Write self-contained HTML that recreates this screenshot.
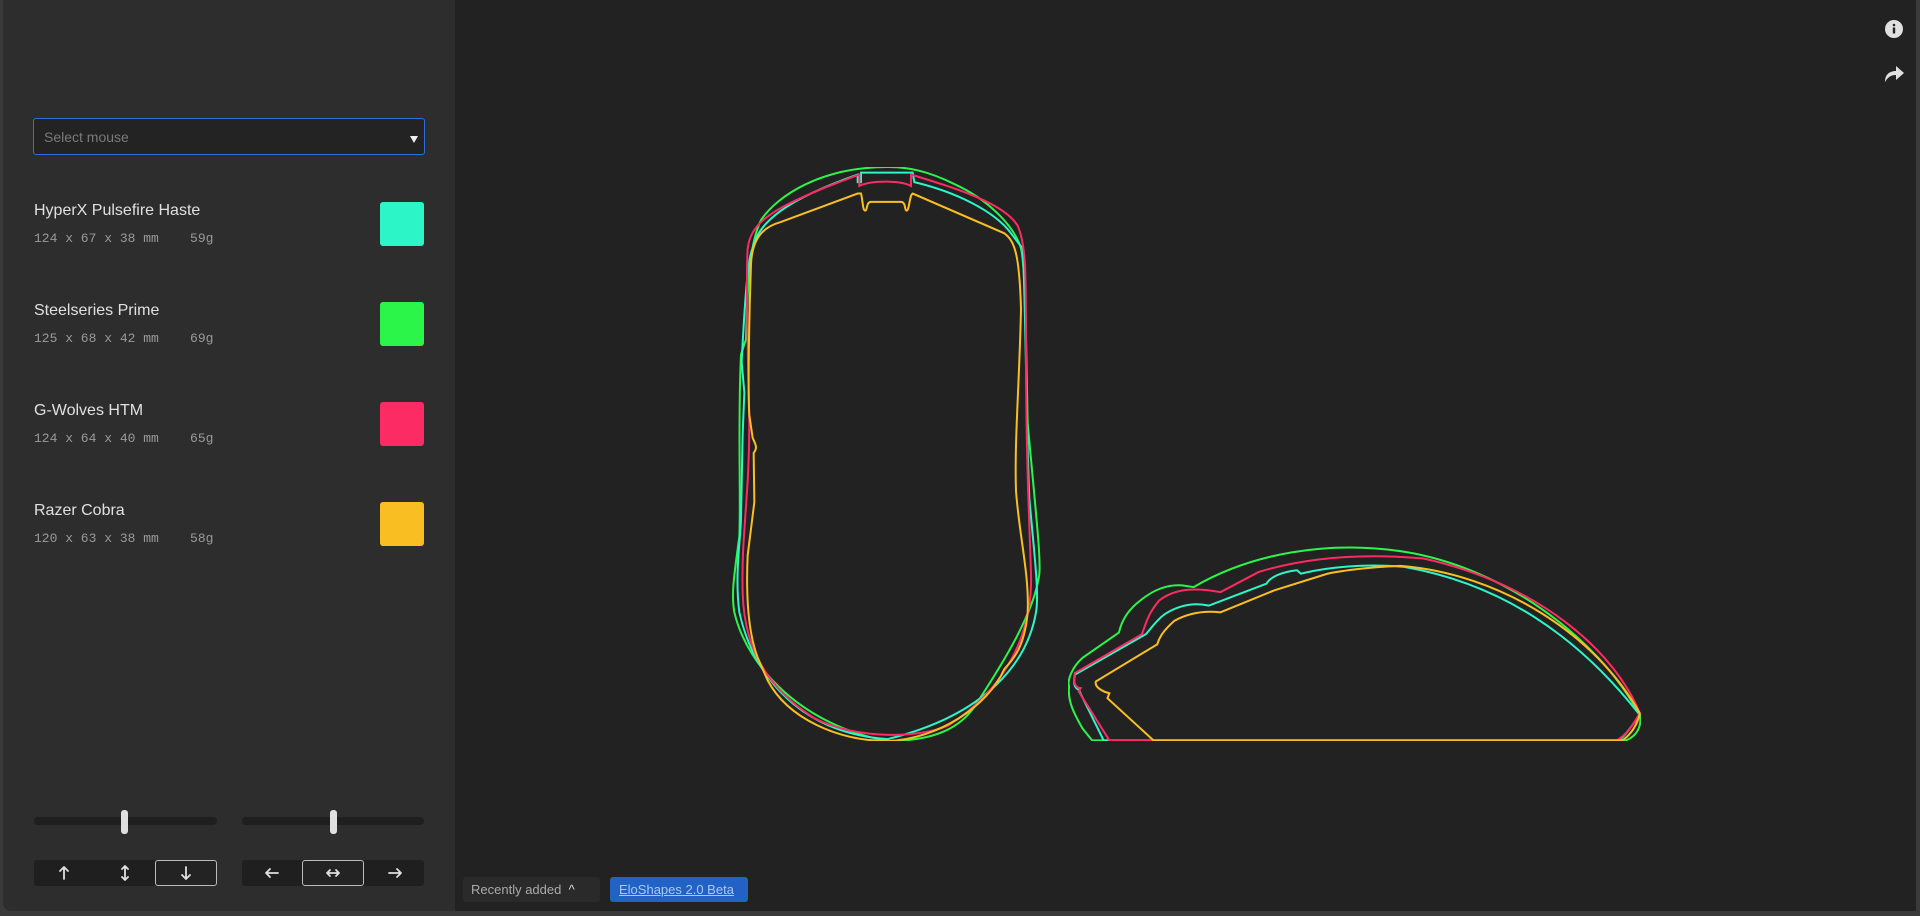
<!DOCTYPE html>
<html><head><meta charset="utf-8"><style>
*{box-sizing:border-box;margin:0;padding:0}
body{width:1920px;height:916px;background:#3a3a3a;position:relative;overflow:hidden;font-family:"Liberation Sans",sans-serif}
#side{position:absolute;left:3px;top:0;width:452px;height:911px;background:#2d2d2d;border-bottom-left-radius:8px}
#main{position:absolute;left:455px;top:0;width:1461px;height:911px;background:#222}
.sel{position:absolute;left:30px;top:118px;width:392px;height:37px;border:1px solid #2d6fe0;border-radius:3px;background:#232323;color:#7a7a7a;font-size:14px;padding:10px 10px}
.sel:after{content:"";position:absolute;right:6px;top:17px;border-left:4px solid transparent;border-right:4px solid transparent;border-top:7px solid #eee}
.it{position:absolute;left:31px;color:#e0e0e0;font-size:16px}
.it .s{font-family:"Liberation Mono",monospace;font-size:13px;color:#9a9a9a;margin-top:11px;white-space:pre}
.sw{position:absolute;left:377px;width:44px;height:44px;border-radius:3px}
.tr{position:absolute;top:817px;height:8px;background:#1f1f1f;border-radius:4px}
.th{position:absolute;top:810px;width:7px;height:24px;background:#e0e0e0;border-radius:3px}
.bg{position:absolute;top:860px;height:26px;background:#1f1f1f;border-radius:3px}
.hl{position:absolute;top:860px;height:26px;border:1px solid #bbb;border-radius:3px;background:#232323}
.ar{position:absolute;top:865px}
</style></head><body>
<div id="side">
<div class="sel">Select mouse</div>
<div class="it" style="top:202px">HyperX Pulsefire Haste<div class="s">124 x 67 x 38 mm    59g</div></div>
<div class="sw" style="top:202px;background:#2cf5c8"></div>
<div class="it" style="top:302px">Steelseries Prime<div class="s">125 x 68 x 42 mm    69g</div></div>
<div class="sw" style="top:302px;background:#2cf54a"></div>
<div class="it" style="top:402px">G-Wolves HTM<div class="s">124 x 64 x 40 mm    65g</div></div>
<div class="sw" style="top:402px;background:#fc2b63"></div>
<div class="it" style="top:502px">Razer Cobra<div class="s">120 x 63 x 38 mm    58g</div></div>
<div class="sw" style="top:502px;background:#f9bf22"></div>
<div class="tr" style="left:31px;width:183px"></div><div class="th" style="left:118px"></div>
<div class="tr" style="left:239px;width:182px"></div><div class="th" style="left:327px"></div>
<div class="bg" style="left:31px;width:183px"></div><div class="hl" style="left:152px;width:62px"></div>
<div class="bg" style="left:239px;width:182px"></div><div class="hl" style="left:299px;width:62px"></div>
<svg class="ar" style="left:0;top:860px" width="452" height="26" fill="none" stroke="#e0e0e0" stroke-width="1.8" stroke-linecap="round" stroke-linejoin="round">
<path d="M61 19V7M57 11L61 7L65 11"/>
<path d="M122 6V20M119 9L122 6L125 9M119 17L122 20L125 17"/>
<path d="M183 7V19M179 15L183 19L187 15"/>
<path d="M263 13H275M267 9L263 13L267 17"/>
<path d="M324 13H336M327 10L324 13L327 16M333 10L336 13L333 16"/>
<path d="M386 13H398M394 9L398 13L394 17"/>
</svg>
</div>
<div id="main">
<div style="position:absolute;left:8px;top:877px;width:137px;height:25px;background:#2a2a2a;border-radius:3px;color:#aaa;font-size:13px;padding:5px 8px">Recently added &nbsp;<span style="color:#ddd">^</span></div>
<div style="position:absolute;left:155px;top:877px;width:138px;height:25px;background:#2262c4;border-radius:3px;color:#aac8f5;font-size:13px;padding:5px 9px;text-decoration:underline">EloShapes 2.0 Beta</div>
<svg style="position:absolute;left:1429px;top:19px" width="20" height="20"><circle cx="10" cy="10" r="9" fill="#e0e0e0"/><circle cx="10" cy="6" r="1.3" fill="#222"/><rect x="8.8" y="8.5" width="2.4" height="6" fill="#222"/></svg>
<svg style="position:absolute;left:1428px;top:64px" width="22" height="20"><path d="M2 18 C2 10 7 7 13 7 L13 2 L21 9 L13 16 L13 11 C8 11 5 13 2 18Z" fill="#e0e0e0"/></svg>
</div>
<svg style="position:absolute;left:731px;top:167px" width="310" height="574" viewBox="30 25 930 1515" preserveAspectRatio="none" fill="none" stroke-width="2">
<path vector-effect="non-scaling-stroke" stroke="#2cf54a" d="M500 25C300 25 170 100 120 165C90 220 80 300 75 480L60 520C50 700 60 900 55 1000C40 1100 30 1150 40 1200C80 1350 250 1500 500 1540C650 1540 720 1500 760 1450C850 1330 940 1200 955 1100C960 1050 940 900 920 700C915 500 915 300 900 240C880 180 800 110 700 70C620 35 560 25 500 25Z"/>
<path vector-effect="non-scaling-stroke" stroke="#2cf5c8" d="M410 45L410 65L420 65L420 40L575 40L580 65C700 90 820 140 870 200L905 240C915 400 915 700 925 900C940 1050 955 1150 945 1200C920 1330 800 1470 500 1535C250 1520 100 1380 55 1200C40 1100 60 1000 60 950L65 730L70 620L62 540C70 400 80 260 95 240C110 170 200 110 410 45Z"/>
<path vector-effect="non-scaling-stroke" stroke="#fc2b63" d="M415 45L415 75C450 60 540 60 570 75L570 45C700 80 850 120 890 180C915 230 915 300 915 500C915 800 925 950 930 1100C935 1250 860 1400 680 1500C600 1530 420 1540 280 1480C140 1400 70 1300 65 1150C60 1000 85 900 85 700C80 500 75 300 80 240C90 170 150 130 415 45Z"/>
<path vector-effect="non-scaling-stroke" stroke="#f9bf22" d="M420 95C425 110 425 140 432 140C440 140 435 117 450 117L540 117C555 117 550 140 557 140C565 140 565 100 575 95L850 200C880 220 895 250 900 400C895 600 880 750 885 880C895 1000 925 1100 920 1200C910 1300 870 1330 850 1350C800 1450 650 1535 500 1540C350 1540 200 1480 140 1380L110 1320C80 1250 75 1150 80 1050L100 910L98 780C110 765 105 760 95 740L85 680C80 600 85 400 90 280C95 200 140 180 180 170L410 95Z"/>
</svg>
<svg style="position:absolute;left:1068px;top:545px" width="573" height="196" viewBox="22 35 1496 582" preserveAspectRatio="none" fill="none" stroke-width="2">
<path vector-effect="non-scaling-stroke" stroke="#2cf54a" d="M85 615L1480 615C1510 600 1520 570 1515 540C1400 300 1150 100 900 55C700 20 500 60 350 160L320 155C270 150 230 180 200 210C170 240 160 270 155 295L60 370C30 400 20 440 25 455C20 500 40 540 60 580Z"/>
<path vector-effect="non-scaling-stroke" stroke="#2cf5c8" d="M115 615L1460 615C1480 600 1500 560 1515 540C1350 300 1150 150 900 100C800 90 700 100 630 120L620 110C580 115 550 130 540 150L390 215C350 205 310 215 275 240C250 260 235 290 225 300L40 420C35 450 40 460 50 465Z"/>
<path vector-effect="non-scaling-stroke" stroke="#fc2b63" d="M130 615L1455 615C1490 590 1500 560 1515 535C1450 350 1250 150 950 75C800 60 650 70 520 115L420 175C350 160 300 165 260 200C230 240 225 270 215 300L40 415C35 440 40 460 55 460L50 470Z"/>
<path vector-effect="non-scaling-stroke" stroke="#f9bf22" d="M245 615L1470 615C1500 590 1510 560 1515 535C1400 300 1150 120 890 97C800 100 720 115 700 120L560 170L420 235C380 230 340 235 300 260C270 290 260 310 255 330L95 440C90 455 110 470 130 475L125 490Z"/>
</svg>
</body></html>
